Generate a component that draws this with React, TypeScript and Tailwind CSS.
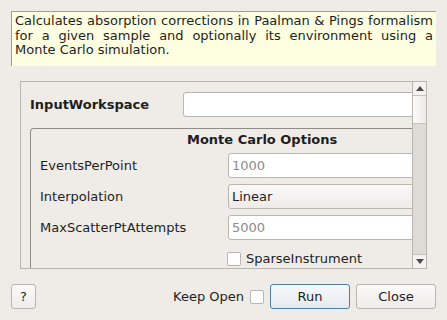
const font = { fontFamily: '"DejaVu Sans", Verdana, sans-serif' };

function TextBox({ value, placeholder, combo }: { value?: string; placeholder?: boolean; combo?: boolean }) {
  return (
    <div
      className={`flex h-[25px] w-[250px] shrink-0 items-center rounded-[3px] border border-[#b9b5b0] px-[3px] text-[13px] ${
        combo ? "bg-gradient-to-b from-[#fbfaf9] to-[#eeebe8] text-[#1e1e1e]" : "bg-white"
      } ${placeholder ? "text-[#8b8b8b]" : ""}`}
    >
      {value}
    </div>
  );
}

function Row({ label, children }: { label: string; children: React.ReactNode }) {
  return (
    <div className="flex h-[25px] items-center">
      <span className="w-[197px] shrink-0 pl-[9px] text-[13px] text-[#1e1e1e]">{label}</span>
      {children}
    </div>
  );
}

function Scrollbar() {
  return (
    <div className="flex w-[14px] shrink-0 flex-col border-l border-[#b9b5b0]">
      <div className="flex h-[14px] items-center justify-center border-b border-[#c6c2bd] bg-[#f4f2f0]">
        <svg width="8" height="5" viewBox="0 0 8 5">
          <path d="M4 0 L8 5 L0 5 Z" fill="#4a4a4a" />
        </svg>
      </div>
      <div className="h-[28px] border-b border-[#c6c2bd] bg-gradient-to-r from-[#fcfbfa] to-[#eeebe8]" />
      <div className="flex-1 bg-[#dedbd7]" />
      <div className="flex h-[14px] items-center justify-center border-t border-[#c6c2bd] bg-[#f4f2f0]">
        <svg width="8" height="5" viewBox="0 0 8 5">
          <path d="M0 0 L8 0 L4 5 Z" fill="#4a4a4a" />
        </svg>
      </div>
    </div>
  );
}

export default function App() {
  return (
    <div className="flex h-[320px] w-[447px] flex-col bg-[#efece8] text-[#1e1e1e]" style={font}>
      {/* description */}
      <div className="ml-[11px] mt-[11px] h-[55px] w-[425px] border-l border-t border-[#a09d99] bg-[#fefee0] px-[3px] pt-[2px] text-[13px] leading-[14.5px] text-[#1e1e1e] [text-align:justify]">
        Calculates absorption corrections in Paalman &amp; Pings formalism for a given sample and optionally its
        environment using a Monte Carlo simulation.
      </div>

      {/* property area */}
      <div className="ml-[20px] mt-[15px] flex h-[188px] w-[407px] overflow-hidden border border-[#b9b5b0]">
        <div className="flex-1 overflow-hidden">
          <div className="mt-[10px] flex h-[25px] items-center">
            <span className="w-[162px] shrink-0 pl-[9px] text-[13px] font-bold">InputWorkspace</span>
            <TextBox />
          </div>
          <div className="ml-[9px] mt-[11px] w-[420px] rounded-tl-[4px] border-l border-t border-[#8f8c88] pb-4">
            <div className="pl-[156px] pt-[2px] text-[13px] font-bold leading-[18px]">Monte Carlo Options</div>
            <div className="mt-[4px] flex flex-col gap-[6px]">
              <Row label="EventsPerPoint">
                <TextBox value="1000" placeholder />
              </Row>
              <Row label="Interpolation">
                <TextBox value="Linear" combo />
              </Row>
              <Row label="MaxScatterPtAttempts">
                <TextBox value="5000" placeholder />
              </Row>
              <div className="flex h-[25px] items-center pl-[196px]">
                <div className="h-[14px] w-[14px] rounded-[2px] border border-[#b9b5b0] bg-white" />
                <span className="ml-[5px] text-[13px]">SparseInstrument</span>
              </div>
            </div>
          </div>
        </div>
        <Scrollbar />
      </div>

      {/* buttons */}
      <div className="mt-[15px] flex h-[25px] items-center pl-[11px] pr-[11px] text-[13px]">
        <button className="h-[25px] w-[25px] rounded-[3px] border border-[#b9b5b0] bg-gradient-to-b from-[#fbfaf9] to-[#efece9] text-[13px]">
          ?
        </button>
        <div className="flex-1" />
        <span>Keep Open</span>
        <div className="ml-[6px] h-[14px] w-[14px] rounded-[2px] border border-[#b9b5b0] bg-white" />
        <button className="ml-[6px] h-[25px] w-[80px] rounded-[3px] border border-[#4f7fa6] bg-gradient-to-b from-[#f6f8fa] to-[#e6ebf0] text-[13px]">
          Run
        </button>
        <button className="ml-[6px] h-[25px] w-[80px] rounded-[3px] border border-[#b9b5b0] bg-gradient-to-b from-[#fbfaf9] to-[#efece9] text-[13px]">
          Close
        </button>
      </div>
    </div>
  );
}
